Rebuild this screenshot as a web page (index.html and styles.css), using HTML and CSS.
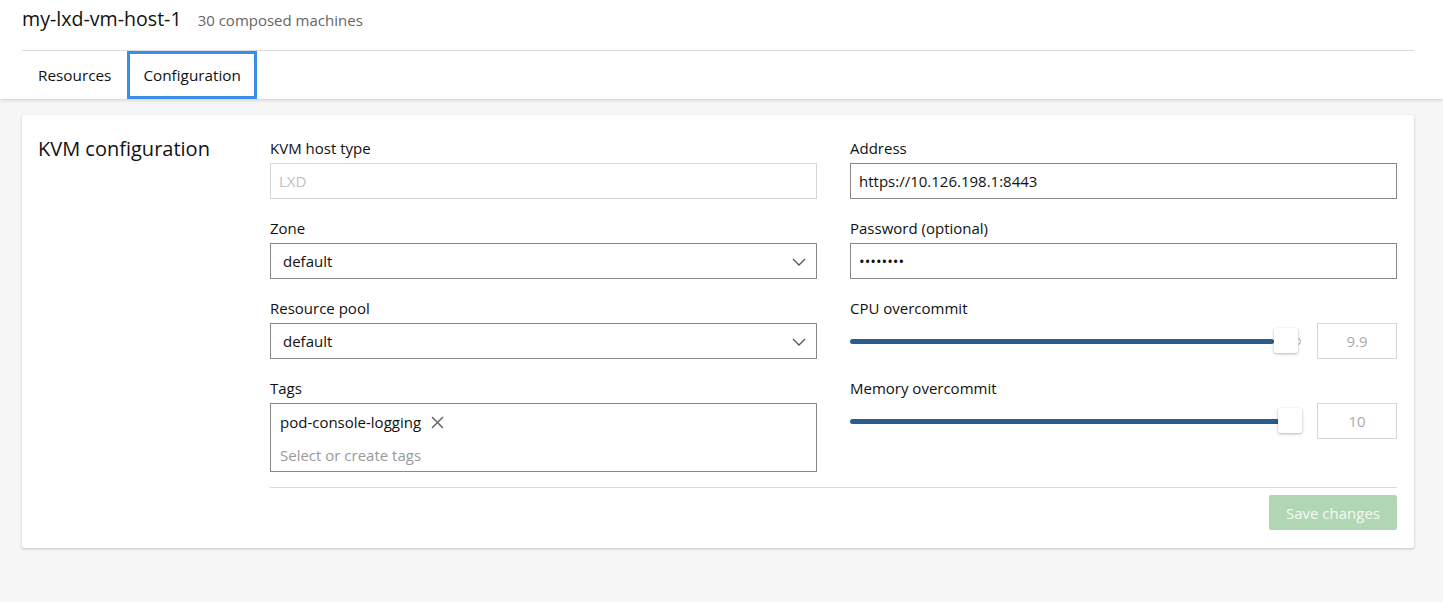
FILE: index.html
```html
<!DOCTYPE html>
<html lang="en">
<head>
<meta charset="utf-8">
<title>my-lxd-vm-host-1</title>
<link rel="stylesheet" href="styles.css">
</head>
<body>
<header class="header">
  <div class="title-row">
    <h1 class="title">my-lxd-vm-host-1</h1>
    <span class="subtitle">30 composed machines</span>
  </div>
  <nav class="tabs">
    <a class="tab">Resources</a>
    <a class="tab tab--active">Configuration</a>
  </nav>
</header>
<main class="main">
  <section class="card">
    <h2 class="card-title">KVM configuration</h2>
    <div class="form">
      <div class="cols">
        <div class="col">
          <div class="field">
            <div class="label">KVM host type</div>
            <div class="input input--disabled">LXD</div>
          </div>
          <div class="field">
            <div class="label">Zone</div>
            <div class="input select">default
              <svg class="chevron" width="14" height="8" viewBox="0 0 14 8"><path d="M1 1l6 6 6-6" fill="none" stroke="#555" stroke-width="1.3"/></svg>
            </div>
          </div>
          <div class="field">
            <div class="label">Resource pool</div>
            <div class="input select">default
              <svg class="chevron" width="14" height="8" viewBox="0 0 14 8"><path d="M1 1l6 6 6-6" fill="none" stroke="#555" stroke-width="1.3"/></svg>
            </div>
          </div>
          <div class="field field--last">
            <div class="label">Tags</div>
            <div class="tags">
              <div class="chip">pod-console-logging
                <svg class="chip-x" width="13" height="13" viewBox="0 0 13 13"><path d="M1 1l11 11M12 1L1 12" fill="none" stroke="#666" stroke-width="1.5"/></svg>
              </div>
              <div class="placeholder">Select or create tags</div>
            </div>
          </div>
        </div>
        <div class="col">
          <div class="field">
            <div class="label">Address</div>
            <div class="input">https://10.126.198.1:8443</div>
          </div>
          <div class="field">
            <div class="label">Password (optional)</div>
            <div class="input password">••••••••</div>
          </div>
          <div class="field">
            <div class="label">CPU overcommit</div>
            <div class="slider-row">
              <div class="slider">
                <div class="track"><div class="fill" style="width:94%"></div><span class="track-end"></span></div>
                <span class="thumb" style="left:424px"></span>
              </div>
              <div class="num">9.9</div>
            </div>
          </div>
          <div class="field field--last">
            <div class="label">Memory overcommit</div>
            <div class="slider-row">
              <div class="slider">
                <div class="track"><div class="fill" style="width:100%"></div></div>
                <span class="thumb" style="left:428px"></span>
              </div>
              <div class="num">10</div>
            </div>
          </div>
        </div>
      </div>
      <hr class="divider">
      <div class="actions">
        <button class="btn" disabled>Save changes</button>
      </div>
    </div>
  </section>
</main>
</body>
</html>
```
FILE: styles.css
```css
* { box-sizing: border-box; }
html, body { margin: 0; }
body {
  background: #f7f7f7;
  font-family: "Open Sans", "Noto Sans", sans-serif;
  font-size: 16px;
  color: #111;
  height: 602px;
}
.header {
  background: #fff;
  padding: 0 29px 0 22px;
  box-shadow: 0 1px 4px rgba(0,0,0,0.18);
  position: relative;
}
.title-row {
  display: flex;
  align-items: baseline;
  gap: 16px;
  height: 51px;
  padding-top: 5px;
  border-bottom: 1px solid #d9d9d9;
}
.title {
  margin: 0;
  font-size: 19.6px;
  font-weight: 400;
  line-height: 28px;
}
.subtitle {
  color: #666;
  font-size: 15px;
}
.tabs {
  display: flex;
  height: 48px;
}
.tab {
  display: flex;
  align-items: center;
  padding: 0 16px;
  font-size: 15.3px;
  color: #111;
}
.tab--active {
  outline: 3px solid #3a8ee6;
  outline-offset: -3px;
}
.main {
  padding: 16px 29px 0 22px;
}
.card {
  background: #fff;
  box-shadow: 0 1px 3px rgba(0,0,0,0.22);
  border-radius: 2px;
  display: flex;
  padding: 22px 17px 18px 16px;
}
.card-title {
  margin: 0;
  width: 232px;
  flex: none;
  font-size: 20px;
  font-weight: 400;
  line-height: 24px;
}
.form { flex: 1; }
.cols {
  display: grid;
  grid-template-columns: 1fr 1fr;
  column-gap: 33px;
}
.field { margin-bottom: 18px; }
.field--last { margin-bottom: 0; }
.label {
  height: 26px;
  line-height: 22px;
  font-size: 15px;
}
.input {
  height: 36px;
  border: 1px solid #888;
  padding: 0 8px;
  display: flex;
  align-items: center;
  font-size: 15px;
  color: #111;
  position: relative;
}
.input--disabled {
  border-color: #d6d6d6;
  color: #c2c2c2;
}
.select { padding-left: 12px; }
.chevron {
  position: absolute;
  right: 10px;
  top: 14px;
}
.password { font-size: 15px; letter-spacing: 0; }
.tags {
  height: 69px;
  border: 1px solid #888;
  padding: 5px 9px 0;
}
.chip {
  display: flex;
  align-items: center;
  gap: 10px;
  height: 26px;
  font-size: 15px;
}
.placeholder {
  margin-top: 10px;
  color: #999;
  font-size: 15px;
  line-height: 20px;
}
.slider-row {
  display: flex;
  align-items: center;
  gap: 16px;
  height: 36px;
}
.slider {
  flex: 1;
  position: relative;
  height: 36px;
  display: flex;
  align-items: center;
}
.track {
  position: relative;
  width: 100%;
  height: 5px;
  border-radius: 3px;
}
.fill {
  height: 5px;
  border-radius: 3px;
  background: #2d5b8c;
}
.track-end {
  position: absolute;
  right: 0;
  top: -1px;
  width: 7px;
  height: 7px;
  border: 1px solid #aaa;
  border-radius: 50%;
}
.thumb {
  position: absolute;
  top: 5px;
  width: 24px;
  height: 25px;
  background: #fff;
  border-radius: 3px;
  box-shadow: 0 1px 3px rgba(0,0,0,0.3);
}
.num {
  width: 80px;
  flex: none;
  height: 36px;
  border: 1px solid #d6d6d6;
  display: flex;
  align-items: center;
  justify-content: center;
  color: #aaa;
  font-size: 15px;
}
.divider {
  border: 0;
  border-top: 1px solid #d9d9d9;
  margin: 15px 0 7px;
}
.actions {
  display: flex;
  justify-content: flex-end;
}
.btn {
  width: 128px;
  height: 35px;
  border: 0;
  border-radius: 2px;
  background: #b1d6b4;
  color: #f4faf4;
  font-family: inherit;
  font-size: 15px;
}
```
